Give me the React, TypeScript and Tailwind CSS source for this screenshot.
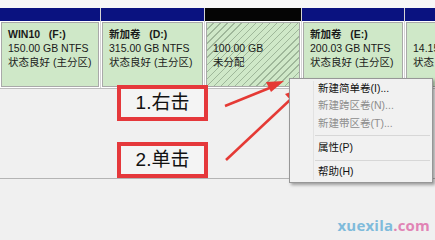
import React from "react";

const font = { fontFamily: '"Liberation Sans", "Noto Sans CJK SC", sans-serif' };

interface Part {
    width: string;
    header: string;
    title?: string;
    lines: string[];
    hatched?: boolean;
}

const parts: Part[] = [
    { width: "w-[100px]", header: "bg-[#0a1280]", title: "WIN10\u00a0\u00a0\u00a0(F:)", lines: ["150.00 GB NTFS", "状态良好 (主分区)"] },
    { width: "w-[103px]", header: "bg-[#0a1280]", title: "新加卷\u00a0\u00a0\u00a0(D:)", lines: ["315.00 GB NTFS", "状态良好 (主分区)"] },
    { width: "w-[96px]", header: "bg-[#050505]", lines: ["100.00 GB", "未分配"], hatched: true },
    { width: "w-[102px]", header: "bg-[#0a1280]", title: "新加卷\u00a0\u00a0\u00a0(E:)", lines: ["200.03 GB NTFS", "状态良好 (主分区)"] },
    { width: "w-[40px]", header: "bg-[#0a1280]", lines: ["14.15 GB", "状态良好"] },
];

const Partition = ({ p }: { p: Part }) => (
    <div className={`${p.width} shrink-0 flex flex-col bg-white`}>
        <div className={`h-[13px] ${p.header}`} />
        <div className="p-[1px] flex-1">
            <div
                className={`h-[65px] border border-[#a9a9a9] bg-[#cfe8c8] pl-[6px] pt-[4px] overflow-hidden whitespace-nowrap text-[10.5px] leading-[14px] text-[#1a1a1a] ${p.hatched ? "bg-[repeating-linear-gradient(135deg,#cfe8c8_0px,#cfe8c8_4px,#9fb79a_4px,#9fb79a_5px)]" : ""}`}
            >
                <div className="h-[14px] font-bold">{p.title ?? ""}</div>
                {p.lines.map((l) => (
                    <div key={l}>{l}</div>
                ))}
            </div>
        </div>
    </div>
);

const menuItems = [
    { label: "新建简单卷(I)...", disabled: false },
    { label: "新建跨区卷(N)...", disabled: true },
    { label: "新建带区卷(T)...", disabled: true },
    { sep: true },
    { label: "属性(P)", disabled: false },
    { sep: true },
    { label: "帮助(H)", disabled: false },
];

const Callout = ({ text }: { text: string }) => (
    <div className="w-[91px] h-[36px] border-[4px] border-[#e5383b] bg-[#f4f4f4] flex items-center justify-center text-[19px] text-[#111]">
        {text}
    </div>
);

export default function App() {
    return (
        <div className="relative w-[435px] h-[240px] overflow-hidden bg-[#f0f0f0]" style={font}>
            <div className="h-[8px] bg-[#f7f7f7]" />
            <div className="flex gap-[1px] bg-[#d4d4d4] border-b border-[#bdbdbd]">
                {parts.map((p, i) => (
                    <Partition key={i} p={p} />
                ))}
            </div>

            <div className="h-[94px] border-b border-[#b4b4b4] flex flex-col gap-[21px] pl-[117px] -mt-[4px]">
                <Callout text="1.右击" />
                <Callout text="2.单击" />
            </div>

            <svg className="absolute left-0 top-0" width="435" height="240" viewBox="0 0 435 240">
                <line x1="225" y1="106" x2="272" y2="87" stroke="#e53a35" strokeWidth="2.5" />
                <polygon points="284,81 266,82 271,92" fill="#e53a35" />
                <line x1="226" y1="160" x2="291" y2="99" stroke="#e53a35" strokeWidth="2.5" />
                <polygon points="302,88 285,94 293,103" fill="#e53a35" />
            </svg>

            <div className="absolute left-[289px] top-[78px] w-[144px] h-[105px] bg-[#f1f1f1] border border-[#979797] shadow-[2px_2px_3px_rgba(0,0,0,0.35)] py-[1px] flex flex-col">
                <div className="absolute left-[23px] top-[2px] bottom-[2px] w-[1px] bg-[#e2e2e2]" />
                {menuItems.map((m, i) =>
                    "sep" in m ? (
                        <div key={i} className="ml-[25px] mr-[2px] my-[3px] h-[1px] bg-[#d7d7d7]" />
                    ) : (
                        <div
                            key={i}
                            className={`h-[17.5px] pl-[28px] flex items-center text-[10.5px] ${m.disabled ? "text-[#8d8d8d]" : "text-[#111]"}`}
                        >
                            {m.label}
                        </div>
                    )
                )}
            </div>

            <div className="absolute right-[5px] bottom-[4px] text-[15px] font-bold tracking-[0.2px]" style={{ fontFamily: '"Open Sans", "Liberation Sans", sans-serif' }}>
                <span className="text-[#7fbbdb]">xuexila</span>
                <span className="text-[#e184b5]">.com</span>
            </div>
        </div>
    );
}
